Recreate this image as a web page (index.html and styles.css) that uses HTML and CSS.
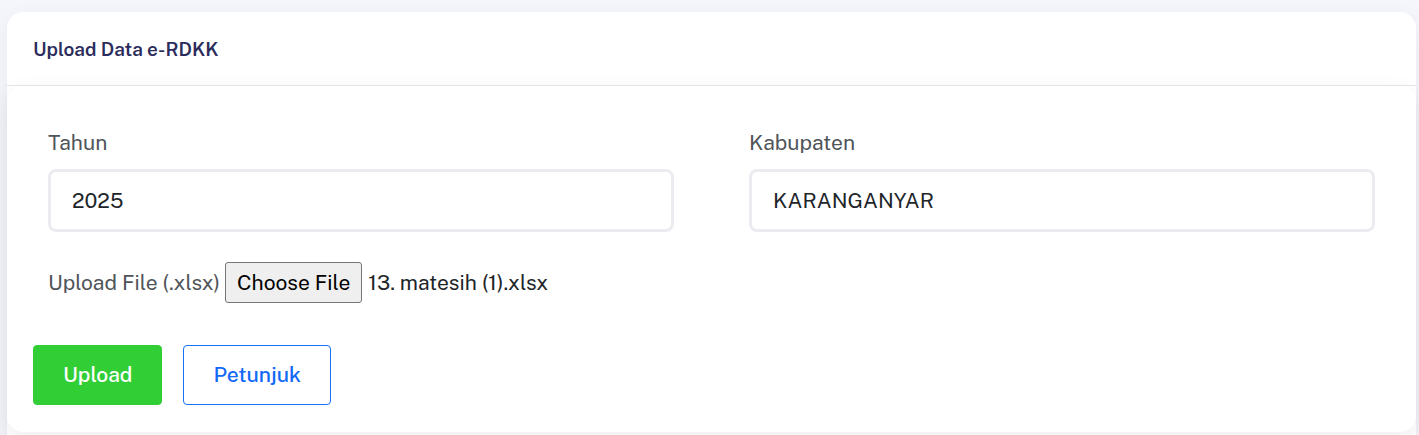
FILE: index.html
```html
<!DOCTYPE html>
<html lang="id">
<head>
<meta charset="utf-8">
<meta name="viewport" content="width=device-width, initial-scale=1">
<title>Upload Data e-RDKK</title>
<link rel="stylesheet" href="styles.css">
</head>
<body>
<main class="panel">
  <header class="panel-header">
    <h1 class="panel-title">Upload Data e-RDKK</h1>
  </header>
  <form class="panel-body">
    <div class="fields">
      <div class="field">
        <label class="label" for="tahun">Tahun</label>
        <input class="control" id="tahun" type="text" value="2025">
      </div>
      <div class="field">
        <label class="label" for="kabupaten">Kabupaten</label>
        <input class="control" id="kabupaten" type="text" value="KARANGANYAR">
      </div>
    </div>
    <div class="file-row">
      <label class="label" for="berkas">Upload File (.xlsx)</label>
      <input class="file" id="berkas" type="file" accept=".xlsx">
    </div>
    <div class="actions">
      <button class="btn btn-upload" type="button">Upload</button>
      <button class="btn btn-guide" type="button">Petunjuk</button>
    </div>
  </form>
</main>
<script src="script.js"></script>
</body>
</html>
```
FILE: styles.css
```css
* {
  box-sizing: border-box;
}

body {
  margin: 0;
  padding: 12px 3px 0 7px;
  background: #f5f6fc;
  color: #212529;
  font-family: "Public Sans", Inter, "Liberation Sans", sans-serif;
  font-size: 21px;
  line-height: 30px;
}

.panel {
  padding-bottom: 3px;
  border-radius: 16px 16px 0 0;
  background: #fff;
  box-shadow: 0 8px 24px rgba(20, 20, 40, 0.06);
}

.panel-header {
  padding: 22px 26px 21px;
  border-bottom: 1px solid #e6e7ea;
}

.panel-title {
  margin: 0;
  color: #2b2c5c;
  font-size: 19px;
  font-weight: 600;
  line-height: 30px;
}

.panel-body {
  padding: 42px 26px 27px;
  border-radius: 16px;
  background: #fff;
  box-shadow: 0 8px 24px rgba(0, 0, 0, 0.07);
}

.fields {
  display: grid;
  grid-template-columns: 1fr 1fr;
  gap: 75px;
  padding: 0 15px;
}

.label {
  color: #50555a;
}

.field .label {
  display: block;
  margin-bottom: 11px;
}

.control {
  display: block;
  width: 100%;
  height: 63px;
  padding: 0 21px;
  border: 3px solid #ebecf2;
  border-radius: 8px;
  background: #fff;
  color: #212529;
  font: inherit;
}

.file-row {
  display: flex;
  align-items: center;
  gap: 5px;
  padding: 30px 15px 42px;
}

.file {
  flex: 1;
  min-width: 0;
  font: inherit;
}

.file::file-selector-button {
  height: 41px;
  margin: 0 6px 0 0;
  padding: 0 11px;
  border: 1px solid #767676;
  border-radius: 3px;
  background: #efefef;
  color: #000;
  font: inherit;
}

.actions {
  display: flex;
  gap: 21px;
}

.btn {
  height: 60px;
  padding: 0 29px;
  border: 1px solid;
  border-radius: 4px;
  font: inherit;
  font-weight: 500;
}

.btn-upload {
  border-color: #31ce36;
  background: #31ce36;
  color: #fff;
}

.btn-guide {
  border-color: #1572f5;
  background: #fff;
  color: #1269f8;
}
```
FILE: script.js
```js
const selected = new DataTransfer();
selected.items.add(new File([""], "13. matesih (1).xlsx"));
document.getElementById("berkas").files = selected.files;
```
